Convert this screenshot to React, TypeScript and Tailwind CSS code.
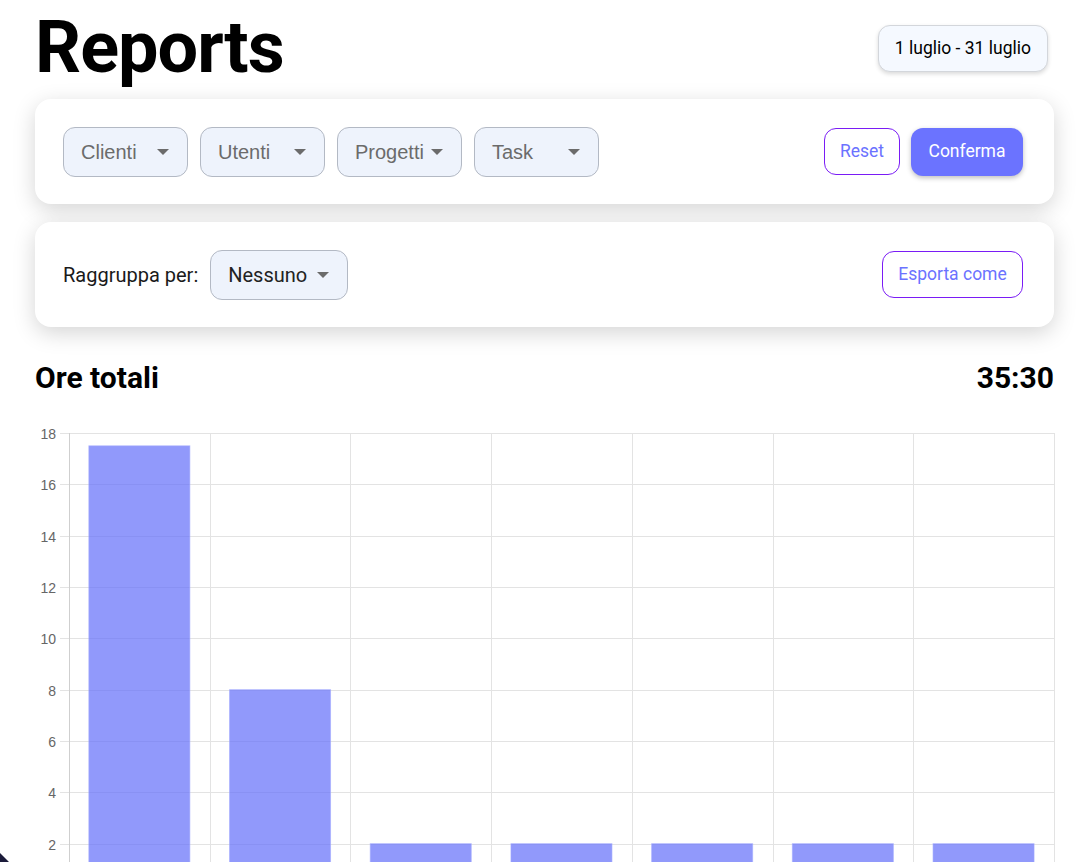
import React from 'react';

const BARS = [17.5, 8, 2, 2, 2, 2, 2];
const TICKS = [18, 16, 14, 12, 10, 8, 6, 4, 2, 0];

function Caret() {
  return (
    <svg width="12" height="6" viewBox="0 0 12 6" className="shrink-0">
      <path d="M0 0 L12 0 L6 6 Z" fill="#6b6b6b" />
    </svg>
  );
}

function FilterSelect({ label }: { label: string }) {
  return (
    <div className="flex h-[50px] w-[125px] items-center justify-between rounded-xl border border-[#b3b9c4] bg-[#eef3fc] pl-[17px] pr-[18px] font-['Liberation_Sans',Arial,sans-serif] text-[20px] text-[#6b6b6b]">
      <span>{label}</span>
      <Caret />
    </div>
  );
}

function HoursChart() {
  const left = 34;
  const top = 13;
  const colW = 140.7;
  const unit = 25.67;
  const zeroY = top + 18 * unit;
  const barW = 101;
  const width = left + colW * 7 + 1;

  return (
    <svg width={width} height={zeroY + 30} className="block">
      {TICKS.map((t) => {
        const y = Math.round(top + (18 - t) * unit) + 0.5;
        return (
          <g key={t}>
            <line x1={left - 9} x2={width} y1={y} y2={y} stroke="#e3e3e3" strokeWidth="1" />
            <text x={left - 13} y={y + 5} textAnchor="end" fontSize="14" fill="#666" fontFamily="'Liberation Sans', Arial, sans-serif">
              {t}
            </text>
          </g>
        );
      })}
      {Array.from({ length: 8 }).map((_, i) => {
        const x = Math.round(left + i * colW) + 0.5;
        return (
          <line key={i} x1={x} x2={x} y1={top} y2={zeroY + 9} stroke={i === 0 ? '#cfcfcf' : '#e3e3e3'} strokeWidth="1" />
        );
      })}
      {BARS.map((v, i) => {
        const x = left + i * colW + (colW - barW) / 2;
        const h = v * unit;
        return (
          <rect key={i} x={x} y={zeroY - h} width={barW} height={h} fill="rgba(99,110,250,0.7)" stroke="rgba(160,168,255,0.6)" strokeWidth="1" />
        );
      })}
    </svg>
  );
}

export default function App() {
  return (
    <div className="relative min-h-screen overflow-hidden bg-white pl-[35px] pr-[28px] font-['Roboto','Liberation_Sans',sans-serif] text-black">
      <header className="mt-[12px] flex items-center justify-between">
        <h1 className="text-[72px] font-bold leading-none tracking-[-1px]">Reports</h1>
        <div className="mr-[6px] flex h-[47px] items-center rounded-xl border border-[#d3d6db] bg-[#f5f9ff] px-4 text-[17.5px] shadow-[0_2px_4px_rgba(0,0,0,0.15)]">
          1 luglio - 31 luglio
        </div>
      </header>

      <section className="mt-[15px] flex h-[105px] items-center justify-between rounded-2xl bg-white pl-[28px] pr-[31px] shadow-[0_6px_22px_rgba(0,0,0,0.17)]">
        <div className="flex gap-[12px]">
          <FilterSelect label="Clienti" />
          <FilterSelect label="Utenti" />
          <FilterSelect label="Progetti" />
          <FilterSelect label="Task" />
        </div>
        <div className="flex items-center gap-[11px]">
          <button className="h-[47px] w-[76px] rounded-xl border border-[#7a1cf5] bg-white text-[17.5px] text-[#6b72ff]">
            Reset
          </button>
          <button className="h-[48px] w-[112px] rounded-xl bg-[#6b73ff] text-[17.5px] text-white shadow-[0_2px_5px_rgba(0,0,0,0.25)]">
            Conferma
          </button>
        </div>
      </section>

      <section className="mt-[18px] flex h-[105px] items-center justify-between rounded-2xl bg-white pl-[28px] pr-[31px] shadow-[0_6px_22px_rgba(0,0,0,0.17)]">
        <div className="flex items-center gap-[12px]">
          <span className="text-[20px] text-[#1a1a1a]">Raggruppa per:</span>
          <div className="flex h-[50px] items-center gap-[10px] rounded-xl border border-[#b3b9c4] bg-[#eef3fc] pl-[17px] pr-[18px] text-[20px] text-[#222]">
            <span>Nessuno</span>
            <Caret />
          </div>
        </div>
        <button className="h-[47px] w-[141px] rounded-xl border border-[#7a1cf5] bg-white text-[17.5px] text-[#6b72ff]">
          Esporta come
        </button>
      </section>

      <div className="mt-[33px] flex items-center justify-between">
        <h2 className="text-3xl font-bold">Ore totali</h2>
        <span className="text-3xl font-bold">35:30</span>
      </div>

      <div className="mt-[24px]">
        <HoursChart />
      </div>

      <div className="fixed bottom-[-16px] left-[-16px] h-[24px] w-[24px] rotate-45 bg-[#1b1b3a]" />
    </div>
  );
}
